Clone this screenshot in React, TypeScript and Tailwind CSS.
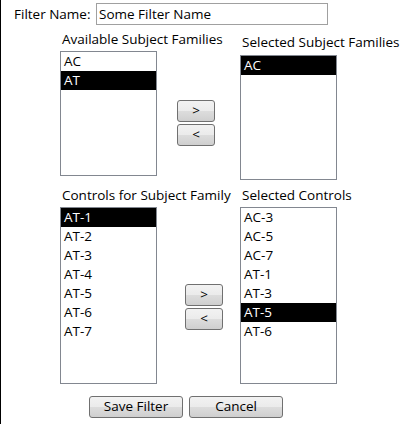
import React from "react";

const availableFamilies = ["AC", "AT"];
const selectedFamilies = ["AC"];
const familyControls = ["AT-1", "AT-2", "AT-3", "AT-4", "AT-5", "AT-6", "AT-7"];
const selectedControls = ["AC-3", "AC-5", "AC-7", "AT-1", "AT-3", "AT-5", "AT-6"];

function ListBox({
  items,
  selected,
  height,
}: {
  items: string[];
  selected: string;
  height: string;
}) {
  return (
    <div className={`w-[97px] ${height} border border-[#828790] bg-white`}>
      {items.map((it) => (
        <div
          key={it}
          className={
            it === selected
              ? "h-[19px] bg-black pl-[3px] leading-[19px] text-white"
              : "h-[19px] pl-[3px] leading-[19px] text-black"
          }
        >
          {it}
        </div>
      ))}
    </div>
  );
}

function WinButton({ label, className }: { label: string; className: string }) {
  return (
    <button
      className={`${className} rounded-[3px] border border-[#707070] bg-[linear-gradient(to_bottom,#f2f2f2_0%,#ebebeb_50%,#dddddd_50%,#cfcfcf_100%)] text-[13.5px] leading-none text-black`}
    >
      {label}
    </button>
  );
}

export default function App() {
  return (
    <div className="h-[424px] w-[420px] overflow-hidden border-l border-black bg-white font-['Open_Sans',sans-serif] text-[13.5px] text-black">
      {/* filter name */}
      <div className="flex items-center pl-[13px] pt-[3px]">
        <span className="w-[82px] leading-[21px]">Filter Name:</span>
        <div className="h-[22px] w-[232px] border border-[#a0a0a0] pl-[2px] leading-[20px]">
          Some Filter Name
        </div>
      </div>

      {/* subject families */}
      <div className="flex">
        <div className="ml-[59px] flex w-[97px] flex-col">
          <div className="mt-[5px] h-[18px] whitespace-nowrap pl-[2px] leading-[18px]">
            Available Subject Families
          </div>
          <div className="mt-[3px]">
            <ListBox items={availableFamilies} selected="AT" height="h-[125px]" />
          </div>
        </div>
        <div className="ml-[20px] mt-[75px] flex flex-col gap-[2px]">
          <WinButton label=">" className="h-[22px] w-[38px]" />
          <WinButton label="<" className="h-[22px] w-[38px]" />
        </div>
        <div className="ml-[25px] flex w-[97px] flex-col">
          <div className="mt-[8px] h-[18px] whitespace-nowrap pl-[2px] leading-[18px]">
            Selected Subject Families
          </div>
          <div className="mt-[4px]">
            <ListBox items={selectedFamilies} selected="AC" height="h-[125px]" />
          </div>
        </div>
      </div>

      {/* controls */}
      <div className="flex">
        <div className="ml-[59px] flex w-[97px] flex-col">
          <div className="mt-[6px] h-[18px] whitespace-nowrap pl-[2px] leading-[18px]">
            Controls for Subject Family
          </div>
          <div className="mt-[3px]">
            <ListBox items={familyControls} selected="AT-1" height="h-[177px]" />
          </div>
        </div>
        <div className="ml-[28px] mt-[104px] flex flex-col gap-[2px]">
          <WinButton label=">" className="h-[22px] w-[38px]" />
          <WinButton label="<" className="h-[22px] w-[38px]" />
        </div>
        <div className="ml-[17px] flex w-[97px] flex-col">
          <div className="mt-[6px] h-[18px] whitespace-nowrap pl-[2px] leading-[18px]">
            Selected Controls
          </div>
          <div className="mt-[3px]">
            <ListBox items={selectedControls} selected="AT-5" height="h-[177px]" />
          </div>
        </div>
      </div>

      {/* actions */}
      <div className="ml-[88px] mt-[12px] flex gap-[6px]">
        <WinButton label="Save Filter" className="h-[22px] w-[94px]" />
        <WinButton label="Cancel" className="h-[22px] w-[94px]" />
      </div>
    </div>
  );
}
